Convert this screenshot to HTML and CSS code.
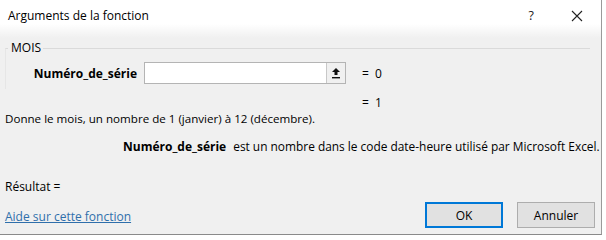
FILE: index.html
```html
<!DOCTYPE html>
<html lang="fr">
<head>
<meta charset="utf-8">
<title>Arguments de la fonction</title>
<link rel="stylesheet" href="styles.css">
</head>
<body>
<div class="dialog">
  <div class="titlebar">
    <span class="title">Arguments de la fonction</span>
    <span class="help">?</span>
    <span class="close">
      <svg width="12" height="12" viewBox="0 0 12 12"><path d="M1 1 L11 11 M11 1 L1 11" stroke="#222" stroke-width="1.1" fill="none"/></svg>
    </span>
  </div>
  <div class="content">
    <fieldset class="group">
      <legend>MOIS</legend>
      <div class="argrow">
        <span class="arglabel">Numéro_de_série</span>
        <div class="inputbox">
          <span class="field"></span>
          <span class="refbtn">
            <svg width="10" height="12" viewBox="0 0 10 12"><path d="M5 1 L9 5 L6.5 5 L6.5 8 L3.5 8 L3.5 5 L1 5 Z" fill="#111"/><rect x="1" y="10" width="8" height="1.4" fill="#111"/></svg>
          </span>
        </div>
        <span class="argval">=&nbsp;&nbsp;0</span>
      </div>
    </fieldset>
    <div class="resultrow">=&nbsp;&nbsp;1</div>
    <p class="desc">Donne le mois, un nombre de 1 (janvier) à 12 (décembre).</p>
    <p class="argdesc"><b>Numéro_de_série</b><span>est un nombre dans le code date-heure utilisé par Microsoft Excel.</span></p>
    <p class="result">Résultat =</p>
    <div class="footer">
      <a class="helplink" href="#">Aide sur cette fonction</a>
      <div class="buttons">
        <button class="btn default">OK</button>
        <button class="btn">Annuler</button>
      </div>
    </div>
  </div>
</div>
</body>
</html>
```
FILE: styles.css
```css
html, body {
  margin: 0;
  padding: 0;
  background: #ffffff;
}
body {
  width: 606px;
  height: 238px;
  overflow: hidden;
  font-family: "Open Sans", "Noto Sans", sans-serif;
  font-size: 12px;
  color: #000;
}
.dialog {
  width: 602px;
  height: 235px;
  box-sizing: border-box;
  border-right: 1px solid #9a9a9a;
  border-bottom: 1px solid #8a8a8a;
  background: #f0f0f0;
  display: flex;
  flex-direction: column;
}
.titlebar {
  height: 42px;
  flex: none;
  display: flex;
  align-items: flex-start;
  padding-top: 7px;
  box-sizing: border-box;
  background: linear-gradient(#ffffff 0px, #ffffff 24px, #f0f0f0 38px);
}
.title {
  margin-left: 8px;
  font-size: 12px;
  flex: 1;
}
.help {
  font-size: 12.5px;
  margin-right: 37px;
  color: #222;
}
.close {
  margin-right: 18px;
  padding-top: 2px;
}
.content {
  flex: 1;
  display: flex;
  flex-direction: column;
  padding: 0 6px 6px 5px;
}
.group {
  margin: 0 5px 0 0;
  padding: 0;
  border: none;
  border-top: 1px solid #dadada;
  border-left: 1px solid #e6e6e6;
  height: 46px;
}
.group legend {
  padding: 0 2px 0 3px;
  margin-left: 2px;
  font-size: 12px;
  line-height: 12px;
}
.argrow {
  display: flex;
  align-items: center;
  margin-top: 8px;
}
.arglabel {
  font-weight: bold;
  width: 131px;
  text-align: right;
  margin-right: 7px;
}
.inputbox {
  width: 202px;
  height: 22px;
  box-sizing: border-box;
  border: 1px solid #b4b4b4;
  display: flex;
  background: #fff;
}
.field {
  flex: 1;
}
.refbtn {
  width: 18px;
  background: #f0f0f0;
  border-left: 1px solid #c8c8c8;
  display: flex;
  align-items: center;
  justify-content: center;
}
.argval {
  margin-left: 16px;
}
.resultrow {
  margin-left: 357px;
  margin-top: 5px;
  height: 17px;
}
.desc {
  margin: 0;
  height: 17px;
  font-size: 11.6px;
}
.argdesc {
  margin: 10px 0 0 118px;
  display: flex;
  height: 17px;
  white-space: nowrap;
}
.argdesc span {
  margin-left: 7px;
  font-size: 11.9px;
}
.result {
  margin: 23px 0 0 0;
  height: 17px;
}
.footer {
  display: flex;
  align-items: flex-end;
  justify-content: space-between;
  margin-top: auto;
}
.helplink {
  color: #2f6fab;
  text-decoration: underline;
  margin-bottom: 3px;
}
.buttons {
  display: flex;
  gap: 14px;
}
.btn {
  width: 78px;
  height: 26px;
  font-family: "Open Sans", "Noto Sans", sans-serif;
  font-size: 12px;
  background: #e1e1e1;
  border: 1px solid #adadad;
  color: #000;
  padding: 0;
}
.btn.default {
  border: 2px solid #0078d7;
}
```
